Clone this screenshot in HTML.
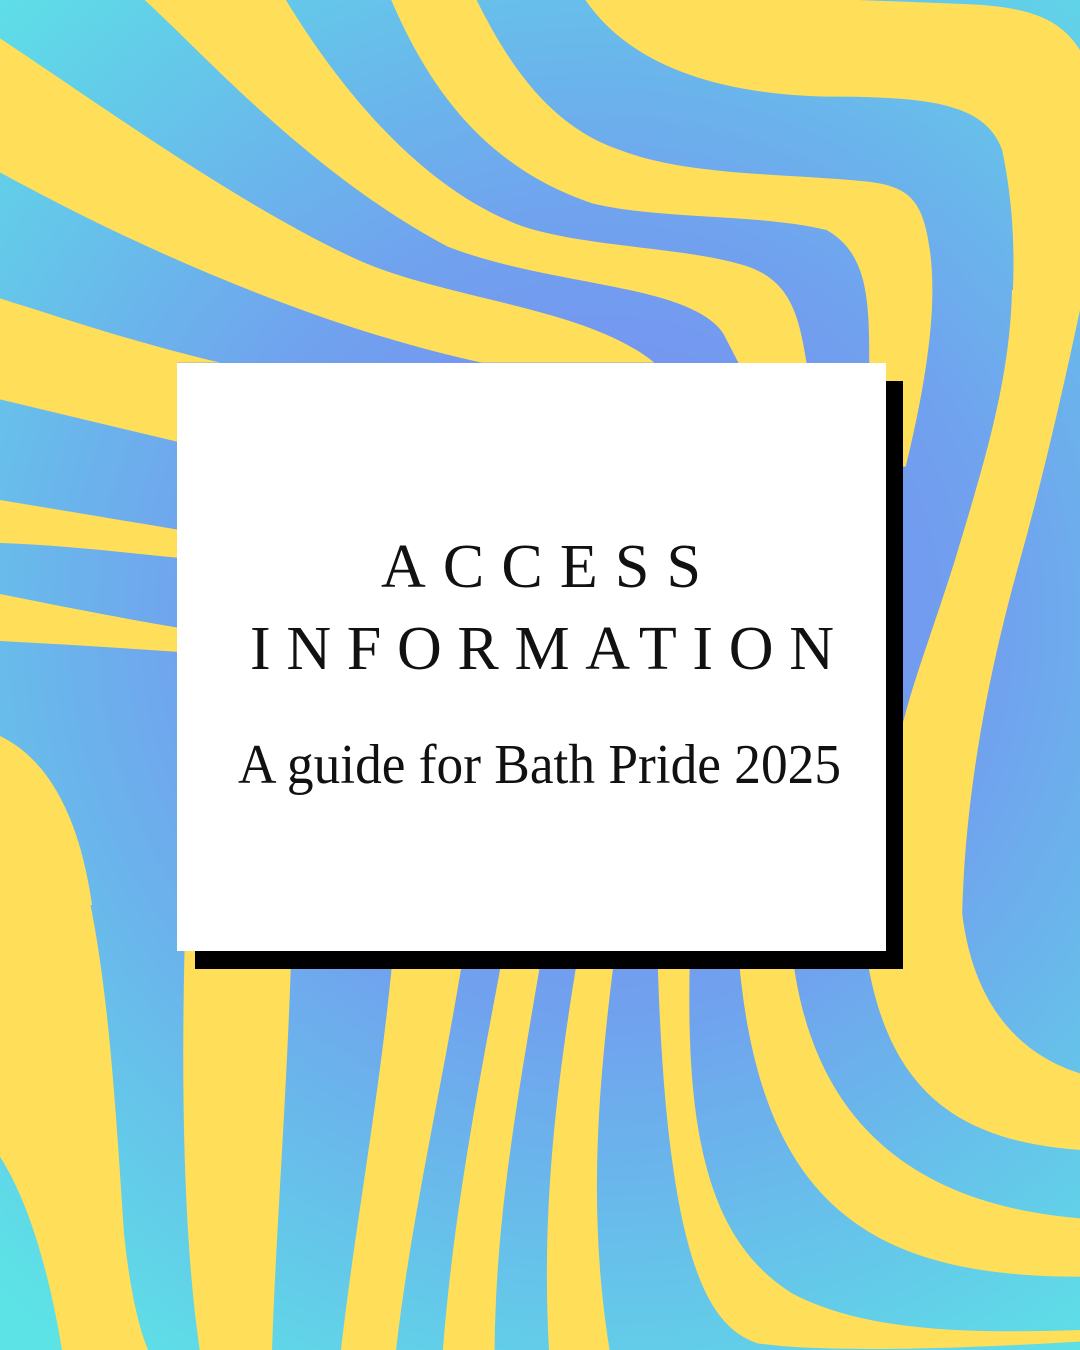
<!DOCTYPE html>
<html><head><meta charset="utf-8"><style>
html,body{margin:0;padding:0;width:1080px;height:1350px;overflow:hidden}
svg{display:block}
</style></head><body>
<svg width="1080" height="1350" viewBox="0 0 1080 1350" xmlns="http://www.w3.org/2000/svg">
<defs>
<radialGradient id="bg" cx="600" cy="620" r="900" gradientUnits="userSpaceOnUse">
<stop offset="0" stop-color="#7c84f4"/>
<stop offset="0.45" stop-color="#70a2ee"/>
<stop offset="1" stop-color="#5ce3e6"/>
</radialGradient>
</defs>
<rect width="1080" height="1350" fill="url(#bg)"/>
<g fill="#ffdf5a">
<g transform="scale(0.68878,0.33333)">
<path d="M0,115 C150,320 350,620 520,780 C650,900 850,920 950,1088 L700,1088 C500,1000 250,800 0,517 Z"/>
<path d="M0,895 C100,960 200,1030 320,1088 L257,1088 L257,1325 L0,1198 Z"/>
<path d="M210,0 C300,170 450,520 650,740 C800,860 1000,850 1050,1000 L1075,1100 L1172,1100 C1160,950 1150,830 1070,790 C980,740 850,740 760,680 C600,560 480,220 415,0 Z"/>
<path d="M568,0 C620,250 700,500 860,610 C960,660 1100,640 1200,690 C1260,760 1262,900 1262,1088 L1262,1400 L1315,1400 C1350,1100 1360,900 1350,750 C1340,600 1320,560 1260,545 C1150,520 1000,530 900,450 C800,380 740,200 692,0 Z"/>
<path d="M850,0 C900,150 1000,280 1200,290 C1350,290 1430,310 1455,450 C1475,650 1472,800 1470,900 L1568,900 L1568,150 C1540,60 1500,20 1400,12 L1245,0 Z"/>
</g>
<path d="M1012,290 C1010,380 985,460 955,560 C930,640 905,700 895,760 L885,960 L962,960 C960,850 975,720 1020,560 C1045,470 1065,380 1080,310 L1080,290 Z"/>
<path d="M0,500 C60,510 120,520 180,530 L180,558 C120,552 60,545 0,543 Z"/>
<path d="M0,594 C60,606 120,618 180,628 L180,652 C120,648 60,644 0,641 Z"/>
<path d="M0,736 C50,760 80,820 92,905 L0,905 Z"/>
<g transform="translate(0,900) scale(0.68878,0.33333)">
<path d="M0,0 L130,0 C160,300 170,700 180,1000 C190,1200 205,1300 215,1350 L90,1350 C70,1100 40,900 0,770 Z"/>
<path d="M270,0 L425,0 C420,500 400,1000 395,1350 L290,1350 C265,1000 262,500 270,0 Z"/>
<path d="M577,0 L685,0 C650,500 600,900 575,1350 L495,1350 C520,900 560,500 577,0 Z"/>
<path d="M745,0 L800,0 C760,500 720,900 718,1350 L643,1350 C660,900 700,500 745,0 Z"/>
<path d="M853,0 L903,0 C870,500 850,900 885,1350 L797,1350 C785,900 810,500 853,0 Z"/>
<path d="M953,0 L1005,0 C990,600 1010,1000 1150,1180 C1260,1300 1420,1300 1568,1290 L1568,1325 C1400,1345 1200,1360 1100,1330 C1030,1280 960,1100 953,0 Z"/>
<path d="M1068,0 L1145,0 C1150,500 1250,900 1568,955 L1568,1130 C1250,1130 1080,900 1068,0 Z"/>
<path d="M1250,0 L1395,0 C1405,260 1460,450 1568,520 L1568,750 C1380,720 1265,560 1250,0 Z"/>
</g>
</g>
<rect x="195" y="381" width="708" height="588" fill="#000"/>
<rect x="177" y="363" width="709" height="588" fill="#fff"/>
<g font-family="'Liberation Serif', serif" fill="#111">
<text x="381" y="587" font-size="62" textLength="320" lengthAdjust="spacing">ACCESS</text>
<text x="250" y="669" font-size="62" textLength="584" lengthAdjust="spacing">INFORMATION</text>
<text x="238" y="783" font-size="56" textLength="603" lengthAdjust="spacingAndGlyphs">A guide for Bath Pride 2025</text>
</g>
</svg>
</body></html>
